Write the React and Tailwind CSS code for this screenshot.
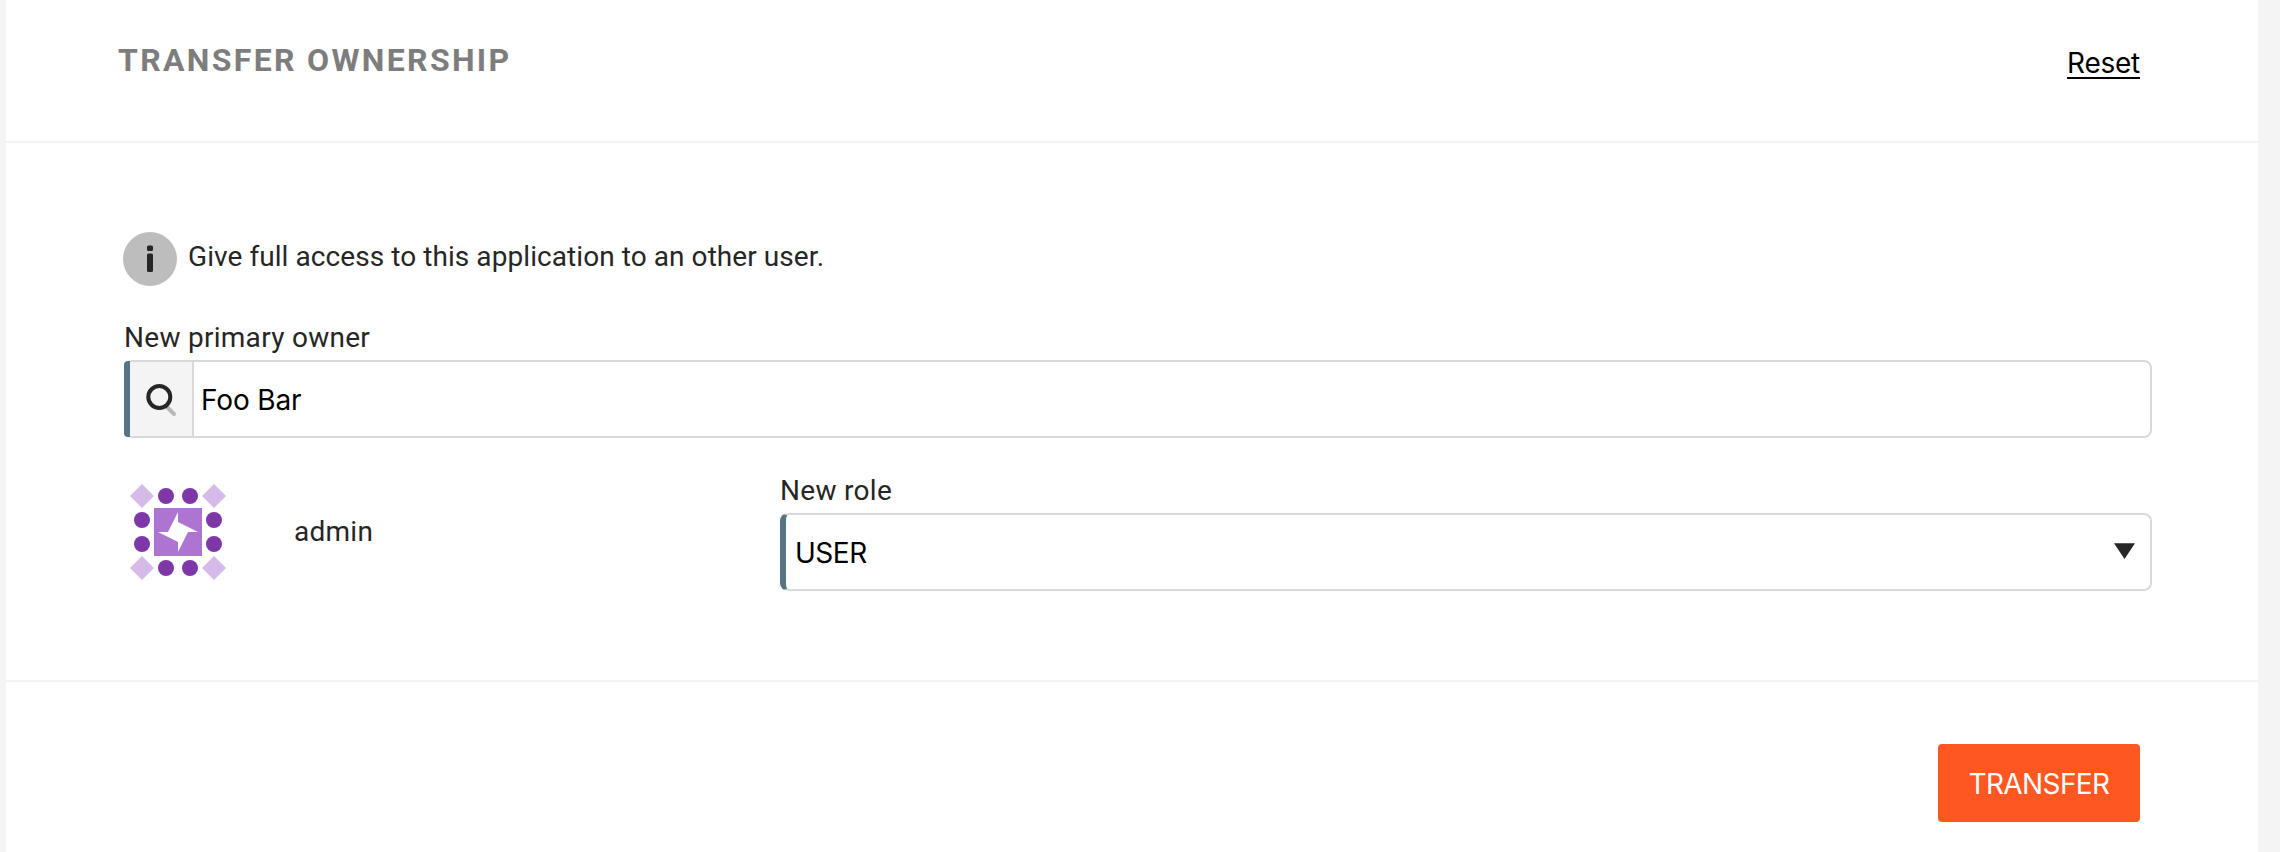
const DIAMONDS = [[12, 12], [84, 12], [12, 84], [84, 84]];
const DOTS = [[36, 12], [60, 12], [12, 36], [84, 36], [12, 60], [84, 60], [36, 84], [60, 84]];

function Avatar() {
  return (
    <svg className="mt-2.5 size-24 shrink-0" viewBox="0 0 96 96">
      {DIAMONDS.map(([x, y]) => (
        <path key={`${x}-${y}`} fill="#d6bbe8" d={`M${x} ${y - 12}l12 12l-12 12l-12 -12z`} />
      ))}
      {DOTS.map(([x, y]) => (
        <circle key={`${x}-${y}`} cx={x} cy={y} r="8" fill="#7d37a7" />
      ))}
      <path fill="#ad74d1" d="M24 24h48v48h-48z" />
      <path fill="#fff" d="M48 28L48 38L68 48L58 48L48 68L48 58L28 48L38 48z" />
    </svg>
  );
}

function InfoIcon() {
  return (
    <svg className="size-[54px] shrink-0" viewBox="0 0 54 54">
      <circle cx="27" cy="27" r="27" fill="#bdbdbd" />
      <rect x="24" y="13.5" width="6" height="5.5" rx="1.5" fill="#262626" />
      <rect x="24" y="21.5" width="6" height="18.5" rx="1.5" fill="#262626" />
    </svg>
  );
}

function SearchIcon() {
  return (
    <svg className="h-[74px] w-[62px]" viewBox="0 0 62 74">
      <path d="M37.5 45.5L44 52" stroke="#b7b7b7" strokeWidth="4" strokeLinecap="round" />
      <circle cx="29.3" cy="35" r="11" fill="#f4f4f4" stroke="#262626" strokeWidth="4" />
    </svg>
  );
}

export default function App() {
  return (
    <div className="h-[852px] w-full bg-[#f4f4f4] pl-1.5 pr-[22px] font-[Roboto,sans-serif] text-[28px] leading-8 text-[#262626]">
      <div className="flex h-full flex-col bg-white">
        <header className="flex h-[143px] shrink-0 items-start justify-between border-b-2 border-[#f4f4f4] pl-[112px] pr-[118px]">
          <h2 className="mt-10 text-[32px] font-bold leading-10 tracking-[2.33px] text-[#7d7d7d]">TRANSFER OWNERSHIP</h2>
          <button className="mt-[46px] font-[Inter,sans-serif] leading-[34px] tracking-[-0.25px] text-black underline decoration-2 underline-offset-4">Reset</button>
        </header>

        <main className="h-[539px] shrink-0 border-b-2 border-[#f4f4f4] pl-[118px] pr-[106px] pt-[89px]">
          <div className="-ml-px flex h-[54px] gap-[11px]">
            <InfoIcon />
            <p className="mt-[9px] tracking-[0.07px]">Give full access to this application to an other user.</p>
          </div>

          <label className="mt-9 block h-[38px] tracking-[0.28px]">New primary owner</label>
          <div className="flex h-[78px] rounded-lg border-2 border-l-0 border-[#d9d9d9] bg-white">
            <span className="-my-px w-1.5 shrink-0 rounded-l bg-[#567484]" />
            <span className="w-16 shrink-0 border-r-2 border-[#d9d9d9] bg-[#f4f4f4]">
              <SearchIcon />
            </span>
            <span className="ml-[7px] self-center pt-px font-[Inter,sans-serif] leading-[34px] tracking-[-0.15px] text-black">Foo Bar</span>
          </div>

          <div className="mt-9 flex pl-1.5">
            <Avatar />
            <span className="ml-[68px] mt-[42px] w-[486px] tracking-[0.25px]">admin</span>
            <div className="grow">
              <label className="block h-[39px] pt-px tracking-[0.3px]">New role</label>
              <div className="flex h-[78px] items-center justify-between rounded-lg border-2 border-l-[6px] border-[#d9d9d9] border-l-[#567484] bg-white pl-[9px] pr-[15px]">
                <span className="pt-0.5 font-[Inter,sans-serif] leading-[34px] tracking-[-0.5px] text-black">USER</span>
                <svg className="-mt-0.5 h-4 w-[21px]" viewBox="0 0 21 16">
                  <path d="M0 .3H21L10.5 16z" fill="#262626" />
                </svg>
              </div>
            </div>
          </div>
        </main>

        <footer className="flex justify-end pr-[118px] pt-[62px]">
          <button className="h-[78px] w-[202px] rounded bg-[#ff5722] pt-px font-[Inter,sans-serif] leading-[34px] tracking-[-0.6px] text-white">TRANSFER</button>
        </footer>
      </div>
    </div>
  );
}
